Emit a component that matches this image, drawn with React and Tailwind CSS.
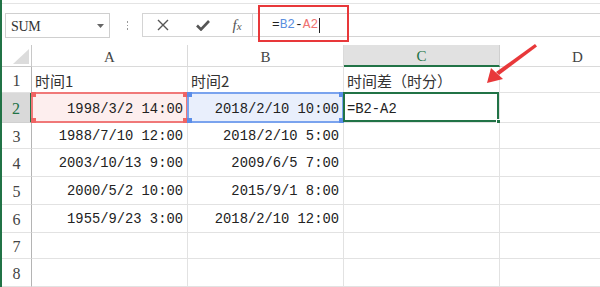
import React from 'react';

const MONO = "font-['Liberation_Mono','Noto_Sans_CJK_SC',monospace]";
const CJK = "font-['Noto_Sans_CJK_SC','Noto_Sans',sans-serif]";
const SERIF = "font-['Liberation_Serif',serif]";

// row heights are read from the screenshot
const rows = [
  { n: 1, h: 'h-[26px]', a: '时间1', b: '时间2', c: '时间差（时分）', head: true },
  { n: 2, h: 'h-[30px]', a: '1998/3/2 14:00', b: '2018/2/10 10:00', c: '=B2-A2' },
  { n: 3, h: 'h-[26px]', a: '1988/7/10 12:00', b: '2018/2/10 5:00' },
  { n: 4, h: 'h-[28px]', a: '2003/10/13 9:00', b: '2009/6/5 7:00' },
  { n: 5, h: 'h-[28px]', a: '2000/5/2 10:00', b: '2015/9/1 8:00' },
  { n: 6, h: 'h-[28px]', a: '1955/9/23 3:00', b: '2018/2/10 12:00' },
  { n: 7, h: 'h-[26px]' },
  { n: 8, h: 'h-[28px]' },
];

function Handles({ color }) {
  return (
    <>
      <span className={`absolute -left-[2px] -top-[2px] w-[5px] h-[5px] ${color}`} />
      <span className={`absolute -right-[2px] -top-[2px] w-[5px] h-[5px] ${color}`} />
      <span className={`absolute -left-[2px] -bottom-[2px] w-[5px] h-[5px] ${color}`} />
      <span className={`absolute -right-[2px] -bottom-[2px] w-[5px] h-[5px] ${color}`} />
    </>
  );
}

function Toolbar() {
  return (
    <div className="relative h-[45px] pt-[3px]">
      <div className="h-[42px] border-t border-[#e4e4e4] pt-[9px] flex items-start">
        {/* name box */}
        <div className="ml-[3px] w-[105px] h-[25px] border border-[#cfcfcf] bg-white flex items-center justify-between pl-[5px] pr-[5px]">
          <span className={`${SERIF} text-[14px] text-[#333] tracking-[-0.3px] pt-[1px]`}>SUM</span>
          <svg width="7" height="4" viewBox="0 0 7 4">
            <path d="M0 0 L7 0 L3.5 4 Z" fill="#666" />
          </svg>
        </div>
        {/* separator dots */}
        <div className="ml-[16px] w-[3px] h-[25px] flex flex-col items-center justify-center gap-[2px]">
          <span className="w-[1.5px] h-[1.5px] bg-[#999]" />
          <span className="w-[1.5px] h-[1.5px] bg-[#999]" />
          <span className="w-[1.5px] h-[1.5px] bg-[#999]" />
        </div>
        {/* cancel / enter / fx */}
        <div className="ml-[13px] w-[111px] h-[24px] border border-[#d4d4d4] bg-white flex items-center">
          <div className="w-[40px] flex justify-center">
            <svg width="12" height="12" viewBox="0 0 12 12">
              <path d="M1 1 L11 11 M11 1 L1 11" stroke="#555" strokeWidth="1.4" />
            </svg>
          </div>
          <div className="w-[40px] flex justify-center">
            <svg width="14" height="11" viewBox="0 0 14 11">
              <path d="M1 5.5 L5 9.5 L13 1" stroke="#555" strokeWidth="2.6" fill="none" />
            </svg>
          </div>
          <div className="w-[28px] flex justify-center">
            <span className={`${SERIF} italic text-[15px] text-[#555] leading-none`}>
              f<span className="text-[11px]">x</span>
            </span>
          </div>
        </div>
        {/* formula field */}
        <div className="flex-1 h-[24px] border-y border-[#d4d4d4] bg-white flex items-center pl-[19px]">
          <span className={`${MONO} text-[12.8px] text-[#222] leading-none flex items-center`}>
            =<span className="text-[#5b8fe0]">B2</span>-<span className="text-[#ef7373]">A2</span>
            <span className="ml-[1px] w-[1px] h-[15px] bg-[#222]" />
          </span>
        </div>
      </div>
      {/* red annotation box */}
      <div className="absolute left-[256px] top-[5px] w-[91px] h-[37px] border-2 border-[#e8383a]" />
    </div>
  );
}

function HeaderRow() {
  const cols = ['A', 'B', 'C', 'D'];
  return (
    <div className="flex h-[22px]">
      <div className="w-[30px] shrink-0 border-r border-b border-[#c8c8c8] relative bg-white">
        <svg className="absolute left-[11px] top-[4px]" width="16" height="15" viewBox="0 0 16 15">
          <path d="M16 0 L16 15 L0 15 Z" fill="#dcdcdc" />
        </svg>
      </div>
      {cols.map((c) => (
        <div
          key={c}
          className={
            c === 'C'
              ? `w-[156px] shrink-0 flex items-center justify-center pt-[3px] bg-[#e1e1e1] border-r border-[#cfcfcf] border-b-2 border-b-[#217346] ${SERIF} text-[15px] text-[#217346]`
              : `w-[156px] shrink-0 flex items-center justify-center pt-[3px] bg-white border-r border-b border-[#dadada] ${SERIF} text-[15px] text-[#444]`
          }
        >
          {c}
        </div>
      ))}
    </div>
  );
}

function Row({ r }) {
  const sel = r.n === 2;
  const txt = r.head ? `${CJK} text-[15px] text-[#333]` : `${MONO} text-[13.8px] text-[#222]`;
  const pad = sel ? 'pt-[5px]' : 'pt-[3px]';
  const cell = 'w-[156px] shrink-0 border-r border-b border-[#e2e2e2] flex items-center relative';
  return (
    <div className={`flex ${r.h}`}>
      <div
        className={
          sel
            ? `w-[30px] shrink-0 flex items-center justify-center bg-[#d9d9d9] border-r-2 border-[#217346] border-b border-b-[#d0d0d0] ${SERIF} text-[16px] text-[#217346] pt-[3px]`
            : `w-[30px] shrink-0 flex items-center justify-center bg-white border-r border-[#b4b4b4] border-b border-b-[#e2e2e2] ${SERIF} text-[16px] text-[#444] pt-[3px]`
        }
      >
        {r.n}
      </div>
      <div className={`${cell} ${r.head ? 'justify-start pl-[3px]' : 'justify-end pr-[4px]'} ${sel ? 'bg-[#fdeeee]' : ''}`}>
        <span className={`${txt} ${pad}`}>{r.a}</span>
        {sel && (
          <div className="absolute -left-px -top-px -right-px -bottom-px border-2 border-[#f07878]">
            <Handles color="bg-[#ef6464]" />
          </div>
        )}
      </div>
      <div className={`${cell} ${r.head ? 'justify-start pl-[3px]' : 'justify-end pr-[4px]'} ${sel ? 'bg-[#e9effc]' : ''}`}>
        <span className={`${txt} ${pad}`}>{r.b}</span>
        {sel && (
          <div className="absolute -left-px -top-px -right-px -bottom-px border-2 border-[#7aa3ee]">
            <Handles color="bg-[#5b8de8]" />
          </div>
        )}
      </div>
      <div className={`${cell} justify-start pl-[3px]`}>
        <span className={`${txt} ${pad}`}>{r.c}</span>
        {sel && (
          <div className="absolute -left-px -top-px right-0 bottom-0 border-2 border-[#217346]">
            <span className="absolute -right-[4px] -bottom-[4px] w-[5px] h-[5px] bg-[#217346] border border-white" />
          </div>
        )}
      </div>
      <div className={cell} />
    </div>
  );
}

export default function App() {
  return (
    <div className="relative w-[600px] h-[287px] overflow-hidden bg-white border-l-2 border-[#217346]">
      <Toolbar />
      <HeaderRow />
      {rows.map((r) => (
        <Row key={r.n} r={r} />
      ))}
      {/* red arrow pointing at C1 */}
      <svg className="absolute left-0 top-0 pointer-events-none" width="600" height="287">
        <path d="M533 44 L535 46.5 L497 75 L494 72 Z" fill="#e8383a" />
        <path d="M485 83 L489 68 L501 79 Z" fill="#e8383a" />
      </svg>
    </div>
  );
}
